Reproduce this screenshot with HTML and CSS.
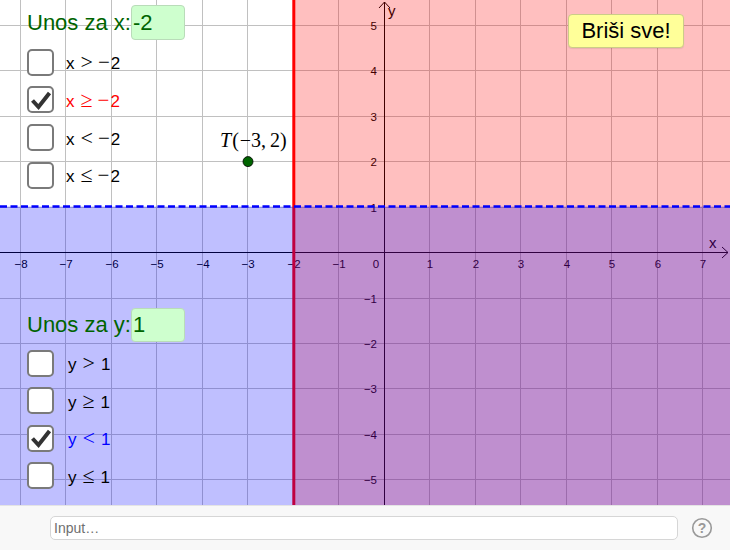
FILE: index.html
```html
<!DOCTYPE html>
<html>
<head>
<meta charset="utf-8">
<link rel="stylesheet" href="styles.css">
</head>
<body>
<div class="app">
  <div class="graph">
    <svg class="canvas" width="730" height="505" viewBox="0 0 730 505" xmlns="http://www.w3.org/2000/svg">
      <g class="grid" stroke="#c0c0c0" stroke-width="1">
        <line x1="20.5" y1="0" x2="20.5" y2="505"/>
        <line x1="65.5" y1="0" x2="65.5" y2="505"/>
        <line x1="111.5" y1="0" x2="111.5" y2="505"/>
        <line x1="156.5" y1="0" x2="156.5" y2="505"/>
        <line x1="202.5" y1="0" x2="202.5" y2="505"/>
        <line x1="247.5" y1="0" x2="247.5" y2="505"/>
        <line x1="293.5" y1="0" x2="293.5" y2="505"/>
        <line x1="338.5" y1="0" x2="338.5" y2="505"/>
        <line x1="429.5" y1="0" x2="429.5" y2="505"/>
        <line x1="475.5" y1="0" x2="475.5" y2="505"/>
        <line x1="520.5" y1="0" x2="520.5" y2="505"/>
        <line x1="566.5" y1="0" x2="566.5" y2="505"/>
        <line x1="611.5" y1="0" x2="611.5" y2="505"/>
        <line x1="657.5" y1="0" x2="657.5" y2="505"/>
        <line x1="702.5" y1="0" x2="702.5" y2="505"/>
        <line x1="0" y1="25.5" x2="730" y2="25.5"/>
        <line x1="0" y1="70.5" x2="730" y2="70.5"/>
        <line x1="0" y1="116.5" x2="730" y2="116.5"/>
        <line x1="0" y1="161.5" x2="730" y2="161.5"/>
        <line x1="0" y1="207.5" x2="730" y2="207.5"/>
        <line x1="0" y1="298.5" x2="730" y2="298.5"/>
        <line x1="0" y1="343.5" x2="730" y2="343.5"/>
        <line x1="0" y1="388.5" x2="730" y2="388.5"/>
        <line x1="0" y1="434.5" x2="730" y2="434.5"/>
        <line x1="0" y1="479.5" x2="730" y2="479.5"/>
      </g>
      <g class="axes" stroke="#000" stroke-width="1" fill="none">
        <line x1="0" y1="252.5" x2="728" y2="252.5"/>
        <polyline points="722,247 728,252.5 722,258"/>
        <line x1="384.5" y1="2" x2="384.5" y2="505"/>
        <polyline points="379,8 384.5,2 390,8"/>
      </g>
      <g class="ticks" font-family="Liberation Sans, Arial, sans-serif" font-size="11.5" fill="#000" text-anchor="middle">
        <text x="21" y="268">−8</text>
        <text x="66" y="268">−7</text>
        <text x="112" y="268">−6</text>
        <text x="157" y="268">−5</text>
        <text x="203" y="268">−4</text>
        <text x="248" y="268">−3</text>
        <text x="294" y="268">−2</text>
        <text x="339" y="268">−1</text>
        <text x="376" y="268">0</text>
        <text x="430" y="268">1</text>
        <text x="476" y="268">2</text>
        <text x="521" y="268">3</text>
        <text x="567" y="268">4</text>
        <text x="612" y="268">5</text>
        <text x="658" y="268">6</text>
        <text x="703" y="268">7</text>
      </g>
      <g class="ticks" font-family="Liberation Sans, Arial, sans-serif" font-size="11.5" fill="#000" text-anchor="end">
        <text x="377" y="29.5">5</text>
        <text x="377" y="75">4</text>
        <text x="377" y="120.5">3</text>
        <text x="377" y="166">2</text>
        <text x="377" y="211.5">1</text>
        <text x="377" y="302.5">−1</text>
        <text x="377" y="348">−2</text>
        <text x="377" y="393">−3</text>
        <text x="377" y="438.5">−4</text>
        <text x="377" y="484">−5</text>
      </g>
      <text x="709" y="248" font-family="Liberation Sans, Arial, sans-serif" font-size="15" fill="#000">x</text>
      <text x="388" y="16" font-family="Liberation Sans, Arial, sans-serif" font-size="15" fill="#000">y</text>

      <rect x="293.8" y="0" width="437" height="505" fill="#ff0000" fill-opacity="0.25"/>
      <line x1="293.8" y1="0" x2="293.8" y2="505" stroke="#ff0000" stroke-width="3"/>
      <rect x="0" y="206.5" width="730" height="299" fill="#0000ff" fill-opacity="0.25"/>
      <line x1="0" y1="206.5" x2="730" y2="206.5" stroke="#0000ff" stroke-width="2.6" stroke-dasharray="7 3.5"/>

      <circle cx="248" cy="161.6" r="5" fill="#006400" stroke="#000" stroke-width="0.8"/>
      <text x="220" y="147" font-family="Liberation Serif, Times New Roman, serif" font-size="20" fill="#000"><tspan font-style="italic">T</tspan><tspan dx="1">(</tspan><tspan dx="1">−3,</tspan><tspan dx="4">2)</tspan></text>
    </svg>

    <div class="panel panel-x">
      <div class="entry">
        <span class="entry-label">Unos za x:</span>
        <span class="entry-box">-2</span>
      </div>
      <div class="rows">
        <div class="row"><span class="box"></span><span class="expr"><span>x</span><span class="op">&gt;</span><span class="minus">−</span><span>2</span></span></div>
        <div class="row red"><span class="box"><svg width="22" height="22" viewBox="0 0 22 22"><polyline points="2.5,11.5 8.5,18 19.5,4" fill="none" stroke="#333" stroke-width="4"/></svg></span><span class="expr"><span>x</span><span class="op">≥</span><span class="minus">−</span><span>2</span></span></div>
        <div class="row"><span class="box"></span><span class="expr"><span>x</span><span class="op">&lt;</span><span class="minus">−</span><span>2</span></span></div>
        <div class="row"><span class="box"></span><span class="expr"><span>x</span><span class="op">≤</span><span class="minus">−</span><span>2</span></span></div>
      </div>
    </div>

    <div class="panel panel-y">
      <div class="entry">
        <span class="entry-label">Unos za y:</span>
        <span class="entry-box">1</span>
      </div>
      <div class="rows">
        <div class="row"><span class="box"></span><span class="expr"><span>y</span><span class="op">&gt;</span><span class="num">1</span></span></div>
        <div class="row"><span class="box"></span><span class="expr"><span>y</span><span class="op">≥</span><span class="num">1</span></span></div>
        <div class="row blue"><span class="box"><svg width="22" height="22" viewBox="0 0 22 22"><polyline points="2.5,11.5 8.5,18 19.5,4" fill="none" stroke="#333" stroke-width="4"/></svg></span><span class="expr"><span>y</span><span class="op">&lt;</span><span class="num">1</span></span></div>
        <div class="row"><span class="box"></span><span class="expr"><span>y</span><span class="op">≤</span><span class="num">1</span></span></div>
      </div>
    </div>

    <button class="clear-btn">Briši sve!</button>
  </div>

  <div class="inputbar">
    <div class="input-field">Input…</div>
    <span class="help">
      <svg width="22" height="22" viewBox="0 0 22 22"><circle cx="11" cy="11" r="9.3" fill="none" stroke="#999" stroke-width="1.6"/></svg>
      <span class="help-q">?</span>
    </span>
  </div>
</div>
</body>
</html>
```

FILE: styles.css
```css
html, body {
  margin: 0;
  padding: 0;
  background: #fff;
}

.app {
  width: 730px;
  height: 550px;
  display: flex;
  flex-direction: column;
  font-family: "Liberation Sans", Arial, sans-serif;
  overflow: hidden;
}

.graph {
  position: relative;
  height: 505px;
  flex: none;
  overflow: hidden;
}

.canvas {
  display: block;
}

.panel {
  position: absolute;
  left: 27px;
  display: flex;
  flex-direction: column;
}

.panel-x {
  top: 5px;
}

.panel-y {
  top: 308px;
}

.entry {
  display: flex;
  align-items: center;
  height: 35px;
}

.panel-y .entry {
  height: 34px;
}

.entry-label {
  font-size: 22px;
  color: #006400;
  width: 104px;
  white-space: nowrap;
}

.entry-box {
  box-sizing: border-box;
  width: 54px;
  height: 100%;
  background: #ceffce;
  border: 1px solid #b9dcb9;
  border-radius: 4px;
  font-size: 22px;
  color: #006400;
  display: flex;
  align-items: center;
  padding-left: 1px;
}

.rows {
  display: flex;
  flex-direction: column;
  margin-top: 3.5px;
}

.panel-y .rows {
  margin-top: 2.8px;
}

.row {
  height: 37.67px;
  display: flex;
  align-items: center;
  font-size: 17px;
  color: #000;
}

.panel-y .row {
  height: 37.4px;
}

.row.red {
  color: #ff0000;
}

.row.blue {
  color: #0000ff;
}

.box {
  box-sizing: border-box;
  width: 27px;
  height: 27px;
  border: 2px solid #7a7a7a;
  border-radius: 5px;
  background: #fff;
  display: flex;
  align-items: center;
  justify-content: center;
  flex: none;
}

.expr {
  display: flex;
  align-items: baseline;
  margin-left: 12px;
}

.panel-y .expr {
  margin-left: 14px;
}

.op {
  margin-left: 6px;
  font-family: "Liberation Serif", "Times New Roman", serif;
  font-size: 22px;
}

.minus {
  margin-left: 5px;
  font-family: "Liberation Serif", "Times New Roman", serif;
  font-size: 21px;
  margin-right: 1px;
}

.num {
  margin-left: 6px;
}

.clear-btn {
  position: absolute;
  left: 568px;
  top: 14px;
  width: 116px;
  height: 34px;
  background: #ffff99;
  border: 1px solid #cccc88;
  border-radius: 4px;
  font-family: "Liberation Sans", Arial, sans-serif;
  font-size: 22px;
  color: #000;
  padding: 0;
  box-shadow: 0 1px 1px rgba(0,0,0,0.08);
}

.inputbar {
  flex: 1;
  background: #f8f8f8;
  border-top: 1px solid #e4e4e4;
  display: flex;
  align-items: center;
  padding-left: 50px;
  box-sizing: border-box;
}

.input-field {
  box-sizing: border-box;
  width: 628px;
  height: 24px;
  background: #fff;
  border: 1px solid #d6d6d6;
  border-radius: 5px;
  font-size: 14px;
  color: #6f6f6f;
  padding-left: 3px;
  display: flex;
  align-items: center;
}

.help {
  position: relative;
  margin-left: 13px;
  width: 22px;
  height: 22px;
  display: flex;
  align-items: center;
  justify-content: center;
}

.help svg {
  position: absolute;
  left: 0;
  top: 0;
}

.help-q {
  position: relative;
  font-size: 14px;
  font-weight: bold;
  color: #999;
}
```
